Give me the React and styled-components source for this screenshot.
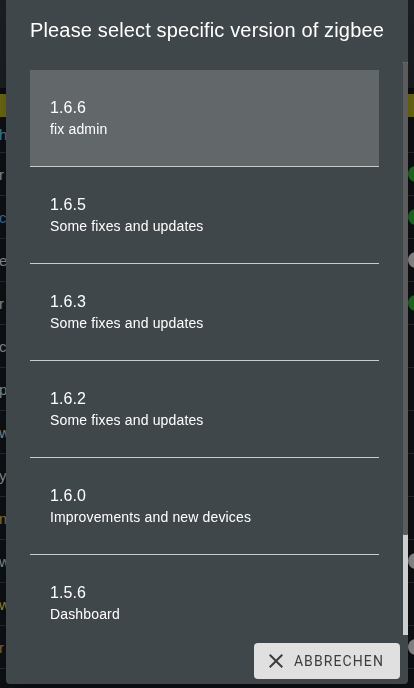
import React from 'react';
import styled, { createGlobalStyle } from 'styled-components';

const GlobalStyle = createGlobalStyle`
  html, body {
    margin: 0;
    padding: 0;
    background: #0e1114;
    overflow: hidden;
  }
  body {
    font-family: "Liberation Sans", Arial, sans-serif;
  }
`;

const Page = styled.div`
  width: 414px;
  height: 688px;
  background: #0e1114;
  overflow: hidden;
  display: flex;
  flex-direction: column;
`;

const Header = styled.div`
  height: 88px;
  flex-shrink: 0;
  background: #1b1f22;
  border-bottom: 6px solid #0b0d10;
`;

const Highlight = styled.div`
  height: 23px;
  flex-shrink: 0;
  background: #6c6812;
`;

const Row = styled.div`
  height: ${(p) => p.$h || 42}px;
  flex-shrink: 0;
  border-bottom: 1px solid #25292c;
  display: flex;
  align-items: center;
  justify-content: space-between;
  font-size: 15px;
`;

const Letter = styled.span`
  color: ${(p) => p.$color};
  margin-left: -1px;
  opacity: 0.8;
`;

const Mark = styled.span`
  width: 16px;
  height: 16px;
  margin-right: -10px;
  border-radius: 50%;
  background: ${(p) => (p.$kind === 'green' ? '#1d6b1d' : '#8a8a8a')};
`;

const Overlay = styled.div`
  position: fixed;
  inset: 0;
  display: flex;
  justify-content: flex-start;
  padding: 0 0 4px 6px;
`;

const Dialog = styled.div`
  width: 402px;
  height: 684px;
  background: #40474a;
  border-radius: 0 0 4px 4px;
  display: flex;
  flex-direction: column;
  color: #fff;
  box-shadow: 0 11px 15px -7px rgba(0, 0, 0, 0.2), 0 24px 38px 3px rgba(0, 0, 0, 0.14);
`;

const Title = styled.h2`
  margin: 0;
  padding: 14px 24px 16px;
  font-size: 20px;
  line-height: 32px;
  font-weight: 400;
  letter-spacing: 0.15px;
  white-space: nowrap;
`;

const Body = styled.div`
  flex: 1;
  min-height: 0;
  display: flex;
`;

const List = styled.div`
  flex: 1;
  min-width: 0;
  overflow: hidden;
  padding: 8px 24px;
`;

const ScrollTrack = styled.div`
  width: 5px;
  background: #cfcfcf;
  display: flex;
  flex-direction: column;
`;

const ScrollThumb = styled.div`
  height: ${(p) => p.$size}px;
  background: #5c5c5c;
  border-radius: 1px;
`;

const Item = styled.div`
  height: 96px;
  padding: 0 20px;
  display: flex;
  flex-direction: column;
  justify-content: center;
  background: ${(p) => (p.$selected ? '#626769' : 'transparent')};
  border-bottom: 1px solid #cacaca;
`;

const Version = styled.div`
  font-size: 16px;
  line-height: 22px;
  letter-spacing: 0.1px;
`;

const Note = styled.div`
  font-size: 14px;
  line-height: 20px;
  letter-spacing: 0.15px;
`;

const Actions = styled.div`
  display: flex;
  justify-content: flex-end;
  padding: 8px 8px 5px;
`;

const CancelButton = styled.button`
  height: 36px;
  display: flex;
  align-items: center;
  gap: 6px;
  padding: 0 16px 0 10px;
  border: none;
  border-radius: 4px;
  background: #e0e0e0;
  color: #3d3d3d;
  font-family: Roboto, "Liberation Sans", sans-serif;
  font-size: 14px;
  letter-spacing: 1.1px;
  text-transform: uppercase;
`;

const rows = [
  { letter: 'h', color: '#5b98a8', h: 35 },
  { letter: 'r', color: '#b8a89a', mark: 'green' },
  { letter: 'c', color: '#4e7fb8', mark: 'green' },
  { letter: 'e', color: '#a9a9a9', mark: 'grey' },
  { letter: 'r', color: '#b8a89a', mark: 'green' },
  { letter: 'c', color: '#a9a9a9' },
  { letter: 'p', color: '#a9a9a9' },
  { letter: 'w', color: '#a9a9a9' },
  { letter: 'y', color: '#a9a9a9' },
  { letter: 'm', color: '#c0803e' },
  { letter: 'w', color: '#a9a9a9', mark: 'grey' },
  { letter: 'w', color: '#c9a040' },
  { letter: 'r', color: '#b8703e', mark: 'grey' },
  { letter: '', color: '#a9a9a9' },
];

const versions = [
  { v: '1.6.6', note: 'fix admin', selected: true },
  { v: '1.6.5', note: 'Some fixes and updates' },
  { v: '1.6.3', note: 'Some fixes and updates' },
  { v: '1.6.2', note: 'Some fixes and updates' },
  { v: '1.6.0', note: 'Improvements and new devices' },
  { v: '1.5.6', note: 'Dashboard' },
];

const CloseIcon = () => (
  <svg width="24" height="24" viewBox="0 0 24 24" fill="currentColor">
    <path d="M19 6.41L17.59 5 12 10.59 6.41 5 5 6.41 10.59 12 5 17.59 6.41 19 12 13.41 17.59 19 19 17.59 13.41 12z" />
  </svg>
);

const App = () => {
  return (
    <>
      <GlobalStyle />
      <Page>
        <Header />
        <Highlight />
        {rows.map((r, i) => (
          <Row key={i} $h={r.h}>
            <Letter $color={r.color}>{r.letter}</Letter>
            {r.mark && <Mark $kind={r.mark} />}
          </Row>
        ))}
      </Page>

      <Overlay>
        <Dialog>
          <Title>Please select specific version of zigbee</Title>
          <Body>
            <List>
              {versions.map((item) => (
                <Item key={item.v} $selected={item.selected}>
                  <Version>{item.v}</Version>
                  <Note>{item.note}</Note>
                </Item>
              ))}
            </List>
            <ScrollTrack>
              <ScrollThumb $size={473} />
            </ScrollTrack>
          </Body>
          <Actions>
            <CancelButton>
              <CloseIcon />
              Abbrechen
            </CancelButton>
          </Actions>
        </Dialog>
      </Overlay>
    </>
  );
};

export default App;
